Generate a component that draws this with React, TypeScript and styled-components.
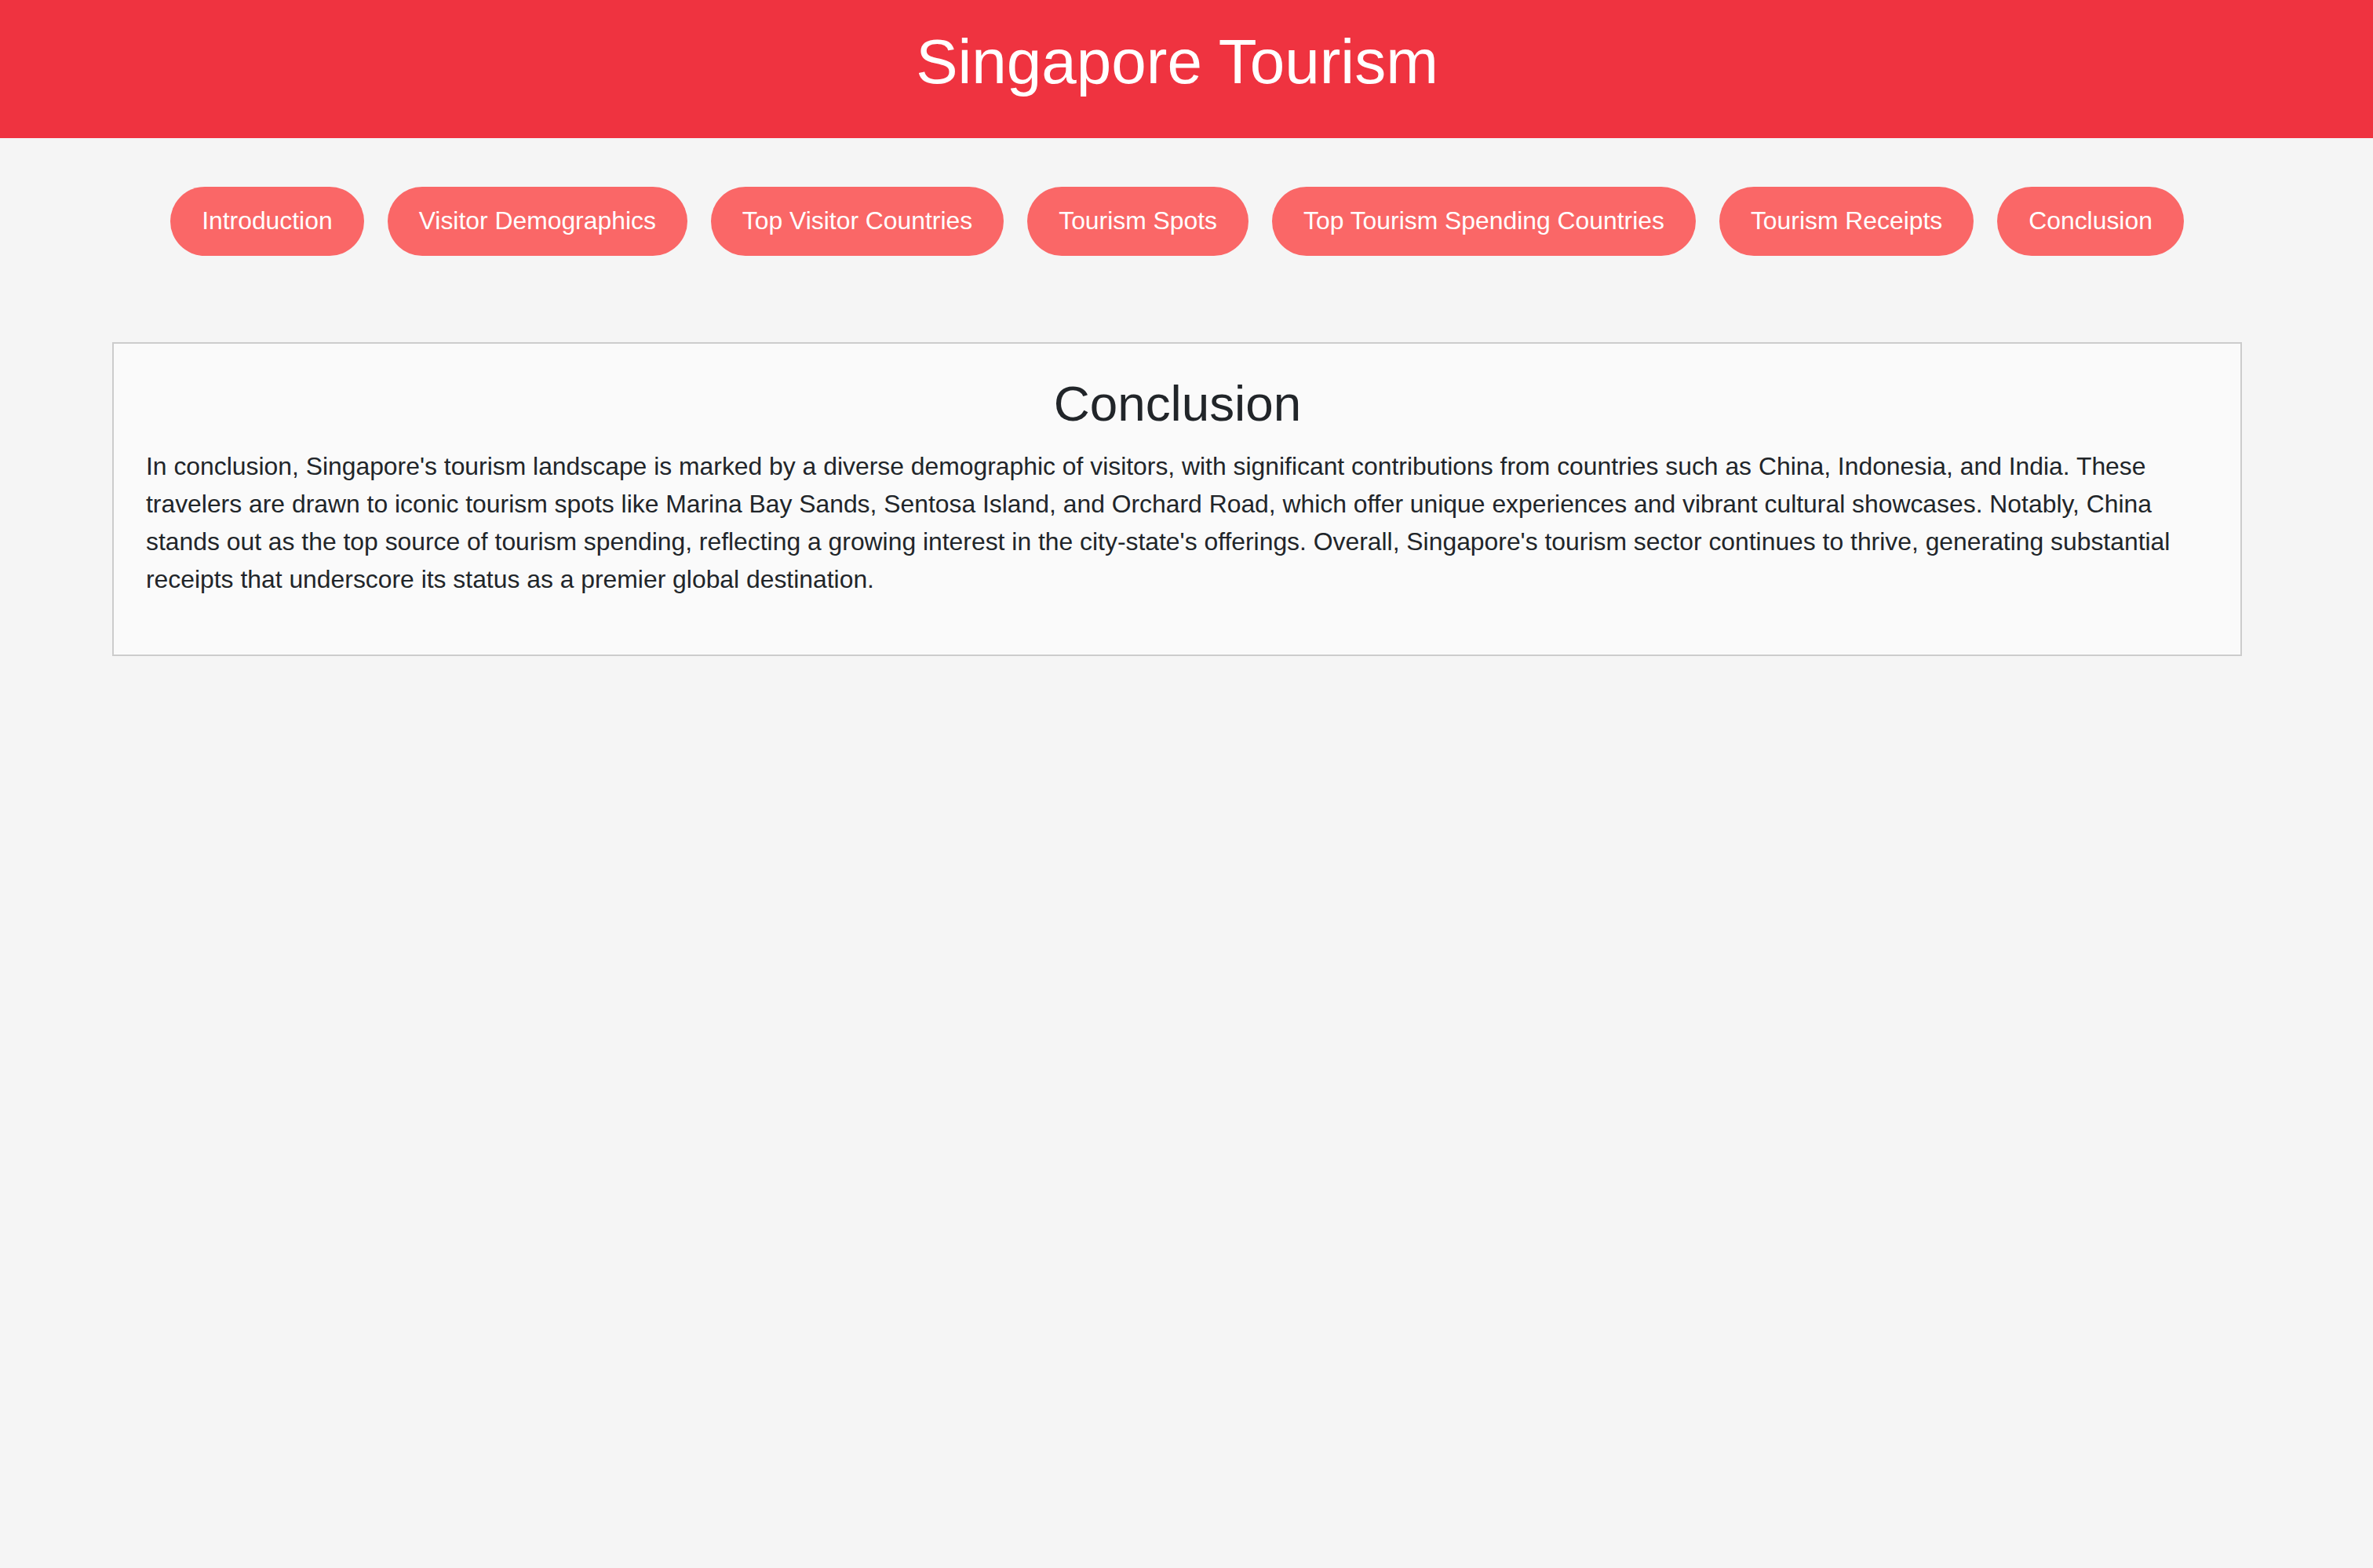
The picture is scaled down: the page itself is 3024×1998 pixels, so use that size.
import React from "react";
import styled, { createGlobalStyle } from "styled-components";

const GlobalStyle = createGlobalStyle`
  html, body {
    margin: 0;
    padding: 0;
    background: #f5f5f5;
    font-family: "Liberation Sans", Arial, Helvetica, sans-serif;
  }
  * { box-sizing: border-box; }
`;

const Page = styled.div`
  min-height: 1998px;
  background: #f5f5f5;
`;

const Header = styled.header`
  background: #ef3340;
  padding: 33px 24px 51px 0;
  text-align: center;
`;

const Title = styled.h1`
  margin: 0;
  font-size: 80px;
  font-weight: 400;
  line-height: 92px;
  color: #ffffff;
`;

const Main = styled.main`
  padding-right: 24px;
`;

const Nav = styled.nav`
  display: flex;
  justify-content: center;
  flex-wrap: wrap;
  gap: 30px;
  margin: 62px 0 110px;
`;

const NavButton = styled.button<{ $active?: boolean }>`
  display: flex;
  align-items: center;
  height: 88px;
  padding: 0 40px;
  border: none;
  border-radius: 44px;
  background: #fa6767;
  color: #ffffff;
  font-family: "Liberation Sans", Arial, Helvetica, sans-serif;
  font-size: 31.875px;
  line-height: 1;
  cursor: pointer;
`;

const Card = styled.section`
  margin: 0 143px;
  background: #fafafa;
  border: 2px solid #cccccc;
  padding: 40px 40px 40px 41px;
`;

const CardTitle = styled.h2`
  margin: 0 0 20px;
  text-align: center;
  font-size: 63.75px;
  font-weight: 400;
  line-height: 73.3px;
  color: #212529;
`;

const Paragraph = styled.p`
  margin: 0 0 32px;
  font-size: 31.875px;
  line-height: 47.8px;
  color: #212529;
`;

const sections = [
  "Introduction",
  "Visitor Demographics",
  "Top Visitor Countries",
  "Tourism Spots",
  "Top Tourism Spending Countries",
  "Tourism Receipts",
  "Conclusion",
];

export default function App() {
  return (
    <Page>
      <GlobalStyle />
      <Header>
        <Title>Singapore Tourism</Title>
      </Header>
      <Main>
        <Nav>
          {sections.map((s) => (
            <NavButton key={s} $active={s === "Conclusion"}>
              {s}
            </NavButton>
          ))}
        </Nav>
        <Card>
          <CardTitle>Conclusion</CardTitle>
          <Paragraph>
            In conclusion, Singapore's tourism landscape is marked by a diverse
            demographic of visitors, with significant contributions from
            countries such as China, Indonesia, and India. These travelers are
            drawn to iconic tourism spots like Marina Bay Sands, Sentosa Island,
            and Orchard Road, which offer unique experiences and vibrant
            cultural showcases. Notably, China stands out as the top source of
            tourism spending, reflecting a growing interest in the city-state's
            offerings. Overall, Singapore's tourism sector continues to thrive,
            generating substantial receipts that underscore its status as a
            premier global destination.
          </Paragraph>
        </Card>
      </Main>
    </Page>
  );
}
